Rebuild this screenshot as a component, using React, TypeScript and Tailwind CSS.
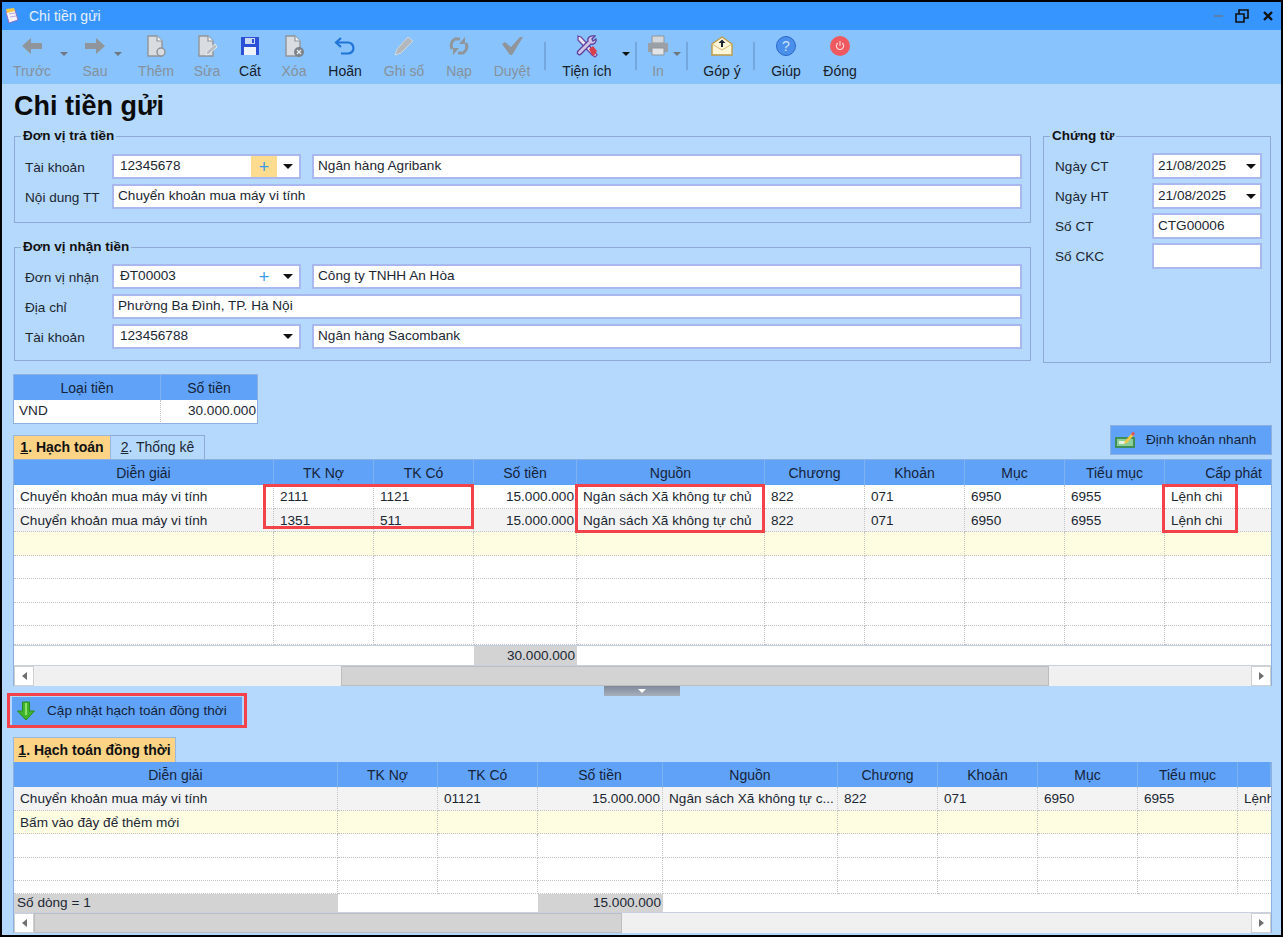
import React from "react";

const Drop = ({ cls, dark }: { cls: string; dark?: boolean }) => (
  <div className={`${cls} w-[8px] flex justify-center pt-[22px]`}>
    <div className={`w-0 h-0 border-l-[4px] border-r-[4px] border-t-[4px] border-l-transparent border-r-transparent ${dark ? "border-t-[#111]" : "border-t-[#6f7680]"}`} />
  </div>
);

const Sep = ({ cls }: { cls: string }) => <div className={`${cls} w-[2px] h-[28px] mt-[12px] bg-[#74a8dc]`} />;

const Tool = ({ cls, label, off, children }: { cls: string; label: string; off?: boolean; children: React.ReactNode }) => (
  <div className={`${cls} flex flex-col items-center pt-[3px]`}>
    <div className="h-[25px] flex items-center justify-center">{children}</div>
    <div className={`mt-[4px] whitespace-nowrap text-[14px] leading-[18px] ${off ? "text-[#86919c]" : "text-[#16202c]"}`}>{label}</div>
  </div>
);

const DocIcon = ({ badge }: { badge?: React.ReactNode }) => (
  <svg width="24" height="24" viewBox="0 0 24 24">
    <path d="M4 2h9l5 5v15H4z" fill="#d9dde2" stroke="#8f959b" strokeWidth="1.4" />
    <path d="M13 2v5h5" fill="#f2f3f5" stroke="#8f959b" strokeWidth="1.2" />
    {badge}
  </svg>
);

const Toolbar = () => (
  <div className="h-[54px] bg-[#89c3fd] flex shrink-0">
    <Tool cls="ml-[6px] w-[48px]" label="Trước" off>
      <svg width="24" height="20" viewBox="0 0 24 20"><path d="M11 2 2 10l9 8v-5h11V7H11z" fill="#8f959b" /></svg>
    </Tool>
    <Drop cls="ml-[4px]" />
    <Tool cls="ml-[8px] w-[38px]" label="Sau" off>
      <svg width="24" height="20" viewBox="0 0 24 20"><path d="M13 2l9 8-9 8v-5H2V7h11z" fill="#8f959b" /></svg>
    </Tool>
    <Drop cls="" />
    <Tool cls="ml-[10px] w-[48px]" label="Thêm" off>
      <DocIcon badge={<circle cx="17" cy="18" r="4" fill="#d9dde2" stroke="#8f959b" strokeWidth="1.5" />} />
    </Tool>
    <Tool cls="ml-[7px] w-[40px]" label="Sửa" off>
      <DocIcon badge={<path d="M11 21l1-4 8-7 2 3-8 7z" fill="#b9bec4" stroke="#f0f2f4" strokeWidth="0.8" />} />
    </Tool>
    <Tool cls="ml-[3px] w-[40px]" label="Cất">
      <svg width="20" height="20" viewBox="0 0 20 20">
        <path d="M1 1h18v18H1z" fill="#2c4fd8" />
        <path d="M5 2h10v6H5z" fill="#c9d8f6" />
        <path d="M12 3h2v4h-2z" fill="#2c4fd8" />
        <path d="M4 11h12v8H4z" fill="#eef2fa" />
      </svg>
    </Tool>
    <Tool cls="ml-[4px] w-[40px]" label="Xóa" off>
      <DocIcon badge={<><circle cx="17" cy="18" r="5" fill="#7c838b" /><path d="M15 16l4 4m0-4-4 4" stroke="#e8eaec" strokeWidth="1.4" /></>} />
    </Tool>
    <Tool cls="ml-[6px] w-[50px]" label="Hoãn">
      <svg width="22" height="20" viewBox="0 0 22 20" fill="none"><path d="M7 2 2 6.500 7 11" stroke="#1f74d8" strokeWidth="2.2" /><path d="M3 6.500h11a5 5 0 0 1 0 11H7" stroke="#1f74d8" strokeWidth="2.2" /></svg>
    </Tool>
    <Tool cls="ml-[9px] w-[50px]" label="Ghi sổ" off>
      <svg width="22" height="22" viewBox="0 0 22 22"><path d="M2 20l2-6L15 2l5 4L8 18z" fill="#b3b8be" stroke="#dfe2e6" strokeWidth="0.7" /></svg>
    </Tool>
    <Tool cls="ml-[10px] w-[40px]" label="Nạp" off>
      <svg width="22" height="22" viewBox="0 0 22 22" fill="none">
        <path d="M4 14a7.500 7.500 0 0 1 3-10h5" stroke="#8f959b" strokeWidth="3" />
        <path d="M18 8a7.500 7.500 0 0 1-3 10h-5" stroke="#8f959b" strokeWidth="3" />
        <path d="M17 2v7h-6z" fill="#8f959b" />
        <path d="M5 20v-7h6z" fill="#8f959b" />
      </svg>
    </Tool>
    <Tool cls="ml-[11px] w-[44px]" label="Duyệt" off>
      <svg width="22" height="20" viewBox="0 0 22 20"><path d="M1 8l3-2 6 5L19 1h3L11 19h-2z" fill="#8f959b" /></svg>
    </Tool>
    <Sep cls="ml-[10px]" />
    <Tool cls="ml-[11px] w-[60px]" label="Tiện ích">
      <svg width="24" height="24" viewBox="0 0 24 24">
        <path d="M3 2l3 1 14 15 2 3-2 2-3-2L3 6z" fill="#e8e6f0" stroke="#6b46a8" strokeWidth="1.3" />
        <path d="M14 15l4-3 4 5-3 5-2-1z" fill="#d8404c" />
        <path d="M20 2l-3 3 1 2 3-2c1 3-2 6-5 5L6 20c-2 2-5-1-3-3L13 7c-1-3 2-6 7-5z" fill="#cfc4e6" stroke="#5c3f9e" strokeWidth="1.3" />
      </svg>
    </Tool>
    <Drop cls="ml-[5px]" dark />
    <Sep cls="ml-[5px]" />
    <Tool cls="ml-[6px] w-[30px]" label="In" off>
      <svg width="22" height="22" viewBox="0 0 22 22">
        <path d="M5 1h12v7H5z" fill="#d4d7db" stroke="#8f959b" />
        <path d="M1 8h20v9H1z" fill="#9aa0a6" />
        <path d="M5 13h12v7H5z" fill="#e2e4e7" stroke="#8f959b" />
      </svg>
    </Tool>
    <Drop cls="" />
    <Sep cls="ml-[5px]" />
    <Tool cls="ml-[9px] w-[50px]" label="Góp ý">
      <svg width="22" height="20" viewBox="0 0 22 20">
        <path d="M1 8 11 1l10 7v11H1z" fill="#fdf6d8" stroke="#c09a45" strokeWidth="1.4" />
        <path d="M1 8l10 6 10-6" fill="none" stroke="#d9bd74" />
        <path d="M11 3.500 7.500 7H10v4h2V7h2.500z" fill="#1d2530" />
      </svg>
    </Tool>
    <Sep cls="ml-[6px]" />
    <Tool cls="ml-[11px] w-[40px]" label="Giúp">
      <div className="w-[20px] h-[20px] rounded-full bg-[#4a8fec] border border-[#2a68c8] flex items-center justify-center text-[#cfe2fb] text-[14px] leading-none">?</div>
    </Tool>
    <Tool cls="ml-[9px] w-[50px]" label="Đóng">
      <div className="w-[20px] h-[20px] rounded-full bg-[#f0585f] flex items-center justify-center">
        <svg width="10" height="10" viewBox="0 0 10 10" fill="none" stroke="#fbdcdc" strokeWidth="1.1"><path d="M5 0v5" /><path d="M2.800 2a3.600 3.600 0 1 0 4.400 0" /></svg>
      </div>
    </Tool>
  </div>
);

const tri = <div className="w-0 h-0 border-l-[5px] border-r-[5px] border-t-[5px] border-l-transparent border-r-transparent border-t-[#111]" />;

const Box = ({ cls, children }: { cls: string; children?: React.ReactNode }) => (
  <div className={`${cls} h-[25px] bg-white border-2 border-[#aab8f0] flex items-center pl-[4px] text-[13.6px] text-[#1c2733] whitespace-nowrap overflow-hidden`}>{children}</div>
);

const Combo = ({ value, plus, hot }: { value: string; plus?: boolean; hot?: boolean }) => (
  <div className="w-[189px] h-[25px] mt-[1px] bg-white border-2 border-[#aab8f0] flex items-center text-[13.6px] text-[#1c2733]">
    <span className="flex-1 pl-[6px]">{value}</span>
    {plus && <span className={`w-[26px] h-full flex items-center justify-center text-[18px] leading-none text-[#3f9ae8] ${hot ? "bg-[#fddc8f]" : ""}`}>+</span>}
    <span className="w-[22px] flex justify-center">{tri}</span>
  </div>
);

const Row = ({ label, children }: { label: string; children: React.ReactNode }) => (
  <div className="flex items-center h-[26px] pl-[10px]">
    <div className="w-[87px] pt-[4px] text-[13.6px] text-[#1c2733]">{label}</div>
    {children}
  </div>
);

const DateBox = ({ label, value, date }: { label: string; value: string; date?: boolean }) => (
  <div className="flex items-center h-[26px] pl-[11px]">
    <div className="w-[97px] pt-[3px] text-[13.6px] text-[#1c2733]">{label}</div>
    <div className="w-[110px] h-[26px] bg-white border-2 border-[#aab8f0] flex items-center pl-[4px] text-[13.6px] text-[#1c2733]">
      <span className="flex-1">{value}</span>
      {date && <span className="w-[18px] flex justify-center">{tri}</span>}
    </div>
  </div>
);

const legendCls = "ml-[6px] px-[2px] text-[13.5px] leading-[16px] font-bold text-[#111]";

const cols1 = "grid grid-cols-[260px_100px_100px_103px_188px_100px_100px_100px_100px_1fr]";
const cols2 = "grid grid-cols-[324px_100px_100px_125px_175px_100px_100px_100px_100px_1fr]";

const HeadRow = ({ cols, names }: { cols: string; names: string[] }) => (
  <div className={`${cols} h-[25px] bg-[#60a2f8] shrink-0`}>
    {names.map((n, i) => (
      <div key={i} className={`border-r border-[#7db2f0] text-[14px] leading-[26px] text-[#15233a] whitespace-nowrap overflow-hidden ${n === "Cấp phát" ? "text-right pr-[9px] border-r-0" : "text-center"}`}>{n}</div>
    ))}
  </div>
);

const DataRow = ({ cols, cells, bg, h, rightIdx }: { cols: string; cells: string[]; bg: string; h: string; rightIdx: number[] }) => (
  <div className={`${cols} ${h} ${bg} shrink-0`}>
    {cells.map((c, i) => (
      <div key={i} className={`border-b border-dotted border-[#c4c4c4] text-[13.6px] leading-[23px] text-[#1c2733] whitespace-nowrap overflow-hidden ${i < 9 ? "border-r" : ""} ${rightIdx.includes(i) ? "text-right pr-[2px] pl-[6px]" : "px-[6px]"}`}>{c}</div>
    ))}
  </div>
);

const ScrollBar = ({ before, thumb }: { before: string; thumb: string }) => (
  <div className="h-[21px] flex bg-[#f0f0f0] border-t border-[#c6d2e2] shrink-0">
    <div className="w-[20px] bg-white border border-[#d0d0d0] flex items-center justify-center">
      <div className="w-0 h-0 border-t-[4px] border-b-[4px] border-r-[5px] border-t-transparent border-b-transparent border-r-[#6f6f6f]" />
    </div>
    <div className={before} />
    <div className={`${thumb} bg-[#d3d3d3] border border-[#bdbdbd]`} />
    <div className="flex-1" />
    <div className="w-[20px] bg-white border border-[#d0d0d0] flex items-center justify-center">
      <div className="w-0 h-0 border-t-[4px] border-b-[4px] border-l-[5px] border-t-transparent border-b-transparent border-l-[#6f6f6f]" />
    </div>
  </div>
);

const blank = Array(10).fill("");
const line = (a: string, b: string) => ["Chuyển khoản mua máy vi tính", a, b, "15.000.000", "Ngân sách Xã không tự chủ", "822", "071", "6950", "6955", "Lệnh chi"];

const Redbox = ({ cls }: { cls: string }) => <div className={`absolute border-[3px] border-[#f4424a] pointer-events-none ${cls}`} />;

export default function App() {
  return (
    <div className="w-[1283px] h-[937px] bg-black pt-[2px] pl-[2px] pr-[2px] pb-[2px] overflow-hidden font-['Liberation_Sans',sans-serif]">
      <div className="h-full flex flex-col bg-[#b5d9fd]">
        <div className="h-[28px] bg-[#3795ff] flex items-center shrink-0">
          <svg className="ml-[2px]" width="16" height="16" viewBox="0 0 16 16">
            <path d="M2 4l9-2 3 10-9 3z" fill="#f4f0f8" stroke="#8a72c8" />
            <path d="M2 1l8-1 1 3-8 2z" fill="#f2c84a" />
            <path d="M5 6l6-1M6 9l6-1" stroke="#b9a8e0" />
          </svg>
          <span className="ml-[9px] text-[14px] text-[#e6f1ff]">Chi tiền gửi</span>
          <div className="ml-auto flex items-center">
            <div className="w-[9px] h-[2px] bg-[#5b7fae]" />
            <svg className="ml-[12px]" width="14" height="14" viewBox="0 0 14 14" fill="none" stroke="#111" strokeWidth="1.6"><path d="M1 5h8v8H1z" /><path d="M4 5V1h9v8H9" /></svg>
            <svg className="ml-[14px] mr-[8px]" width="10" height="10" viewBox="0 0 10 10" fill="none" stroke="#111" strokeWidth="2.4"><path d="M1 1l8 8M9 1l-8 8" /></svg>
          </div>
        </div>
        <Toolbar />

        <div className="flex-1 flex flex-col pl-[11px] pr-[9px]">
          <div className="h-[44px] pt-[6px] pl-[1px] text-[27px] leading-[32px] font-bold text-[#0b0b0b] whitespace-nowrap">Chi tiền gửi</div>

          <div className="flex ml-[1px]">
            <div className="w-[1017px]">
              <fieldset className="h-[95px] border border-[#8fa9d6]">
                <legend className={legendCls}>Đơn vị trả tiền</legend>
                <div className="pt-[9px] flex flex-col gap-[4px]">
                  <Row label="Tài khoản">
                    <Combo value="12345678" plus hot />
                    <Box cls="ml-[11px] w-[710px]">Ngân hàng Agribank</Box>
                  </Row>
                  <Row label="Nội dung TT">
                    <Box cls="w-[910px]">Chuyển khoản mua máy vi tính</Box>
                  </Row>
                </div>
              </fieldset>
              <fieldset className="mt-[16px] h-[122px] border border-[#8fa9d6]">
                <legend className={legendCls}>Đơn vị nhận tiền</legend>
                <div className="pt-[8px] flex flex-col gap-[4px]">
                  <Row label="Đơn vị nhận">
                    <Combo value="ĐT00003" plus />
                    <Box cls="ml-[11px] w-[710px]">Công ty TNHH An Hòa</Box>
                  </Row>
                  <Row label="Địa chỉ">
                    <Box cls="w-[910px]">Phường Ba Đình, TP. Hà Nội</Box>
                  </Row>
                  <Row label="Tài khoản">
                    <Combo value="123456788" />
                    <Box cls="ml-[11px] w-[710px]">Ngân hàng Sacombank</Box>
                  </Row>
                </div>
              </fieldset>
            </div>
            <fieldset className="ml-[12px] w-[228px] h-[235px] border border-[#8fa9d6]">
              <legend className={legendCls}>Chứng từ</legend>
              <div className="pt-[9px] flex flex-col gap-[4px]">
                <DateBox label="Ngày CT" value="21/08/2025" date />
                <DateBox label="Ngày HT" value="21/08/2025" date />
                <DateBox label="Số CT" value="CTG00006" />
                <DateBox label="Số CKC" value="" />
              </div>
            </fieldset>
          </div>

          <div className="mt-[11px] w-[245px] h-[50px] border border-[#8fb0de] bg-white">
            <div className="h-[25px] bg-[#60a2f8] flex text-[14px] leading-[26px] text-[#15233a] text-center">
              <div className="w-[147px] border-r border-[#7db2f0]">Loại tiền</div>
              <div className="flex-1">Số tiền</div>
            </div>
            <div className="flex text-[13.6px] leading-[22px] text-[#1c2733]">
              <div className="w-[147px] pl-[5px] border-r border-dotted border-[#c4c4c4]">VND</div>
              <div className="flex-1 text-right pr-[1px]">30.000.000</div>
            </div>
          </div>

          <div className="mt-[1px] h-[34px] flex items-end justify-between shrink-0">
            <div className="flex h-[24px]">
              <div className="w-[98px] bg-[#fdd486] border border-b-0 border-[#9ab6dc] text-center text-[14px] leading-[23px] font-bold text-[#111]"><span className="underline">1</span>. Hạch toán</div>
              <div className="w-[94px] border border-l-0 border-b-0 border-[#8fa9d6] text-center text-[14px] leading-[23px] text-[#1c2733]"><span className="underline">2</span>. Thống kê</div>
            </div>
            <div className="w-[162px] h-[30px] mb-[4px] bg-[#60a2f8] border border-[#8fb0de] flex items-center text-[13.6px] text-[#15233a]">
              <svg className="ml-[4px]" width="21" height="18" viewBox="0 0 21 18">
                <path d="M0 6h20v11H0z" fill="#3f8f58" />
                <path d="M2 8h16v7H2z" fill="#8ccf98" />
                <path d="M4 10h6v3H4z" fill="#e4f2df" />
                <path d="M9 13l1-3 7-8 2 2-7 8z" fill="#f2c84a" />
                <path d="M16 3l2-2.500 2 2-2 2.500z" fill="#e0525a" />
              </svg>
              <span className="ml-[10px]">Định khoản nhanh</span>
            </div>
          </div>

          <div className="relative h-[227px] border border-[#8fb0de] bg-white flex flex-col shrink-0">
            <HeadRow cols={cols1} names={["Diễn giải", "TK Nợ", "TK Có", "Số tiền", "Nguồn", "Chương", "Khoản", "Mục", "Tiểu mục", "Cấp phát"]} />
            <DataRow cols={cols1} cells={line("2111", "1121")} bg="bg-white" h="h-[24px]" rightIdx={[3]} />
            <DataRow cols={cols1} cells={line("1351", "511")} bg="bg-[#f3f3f3]" h="h-[23px]" rightIdx={[3]} />
            <DataRow cols={cols1} cells={blank} bg="bg-[#fefde2]" h="h-[24px]" rightIdx={[]} />
            <DataRow cols={cols1} cells={blank} bg="bg-white" h="h-[23px]" rightIdx={[]} />
            <DataRow cols={cols1} cells={blank} bg="bg-white" h="h-[24px]" rightIdx={[]} />
            <DataRow cols={cols1} cells={blank} bg="bg-white" h="h-[23px]" rightIdx={[]} />
            <DataRow cols={cols1} cells={blank} bg="bg-white" h="h-[19px]" rightIdx={[]} />
            <div className="h-[20px] flex border-t border-[#c6d2e2] shrink-0 text-[13.6px] leading-[19px] text-[#1c2733]">
              <div className="w-[460px]" />
              <div className="w-[103px] bg-[#d3d3d3] text-right pr-[2px]">30.000.000</div>
            </div>
            <ScrollBar before="w-[307px]" thumb="w-[708px]" />
            <Redbox cls="left-[249px] top-[24px] w-[211px] h-[45px]" />
            <Redbox cls="left-[561px] top-[24px] w-[190px] h-[49px]" />
            <Redbox cls="left-[1148px] top-[24px] w-[76px] h-[49px]" />
          </div>

          <div className="h-[11px] flex justify-center shrink-0">
            <div className="ml-[-2px] w-[76px] h-[10px] bg-linear-to-b from-[#7f8a9b] to-[#a6afbc] flex items-center justify-center">
              <div className="w-0 h-0 border-l-[4px] border-r-[4px] border-t-[4px] border-l-transparent border-r-transparent border-t-white" />
            </div>
          </div>

          <div className="relative ml-[-1px] w-[230px] h-[28px] bg-[#60a2f8] flex items-center text-[13.6px] text-[#15233a] shrink-0">
            <svg className="ml-[4px]" width="20" height="20" viewBox="0 0 20 20">
              <path d="M6.500 1h7v9h5L10 19 1.500 10h5z" fill="#3fb52c" stroke="#2c8c20" strokeWidth="1" />
              <path d="M9 2h2v12H9z" fill="#8fe06a" />
            </svg>
            <span className="ml-[11px]">Cập nhật hạch toán đồng thời</span>
            <Redbox cls="left-[-5px] top-[-4px] w-[240px] h-[35px]" />
          </div>

          <div className="mt-[12px] w-[163px] h-[25px] bg-[#fdd486] border border-b-0 border-[#9ab6dc] text-center text-[14px] leading-[24px] font-bold text-[#111] shrink-0"><span className="underline">1</span>. Hạch toán đồng thời</div>

          <div className="h-[171px] border-x border-[#8fb0de] bg-white flex flex-col shrink-0">
            <HeadRow cols={cols2} names={["Diễn giải", "TK Nợ", "TK Có", "Số tiền", "Nguồn", "Chương", "Khoản", "Mục", "Tiểu mục", ""]} />
            <DataRow cols={cols2} cells={["Chuyển khoản mua máy vi tính", "", "01121", "15.000.000", "Ngân sách Xã không tự c...", "822", "071", "6950", "6955", "Lệnh chi"]} bg="bg-[#f3f3f3]" h="h-[24px]" rightIdx={[3]} />
            <DataRow cols={cols2} cells={["Bấm vào đây để thêm mới", "", "", "", "", "", "", "", "", ""]} bg="bg-[#fefde2]" h="h-[23px]" rightIdx={[]} />
            <DataRow cols={cols2} cells={blank} bg="bg-white" h="h-[24px]" rightIdx={[]} />
            <DataRow cols={cols2} cells={blank} bg="bg-white" h="h-[23px]" rightIdx={[]} />
            <DataRow cols={cols2} cells={blank} bg="bg-white" h="h-[13px]" rightIdx={[]} />
            <div className="h-[18px] flex shrink-0 text-[13.6px] leading-[18px] text-[#1c2733]">
              <div className="w-[324px] bg-[#d3d3d3] pl-[3px]">Số dòng = 1</div>
              <div className="w-[200px]" />
              <div className="w-[125px] bg-[#d3d3d3] text-right pr-[2px]">15.000.000</div>
            </div>
            <ScrollBar before="w-0" thumb="w-[588px]" />
          </div>
        </div>
      </div>
    </div>
  );
}
